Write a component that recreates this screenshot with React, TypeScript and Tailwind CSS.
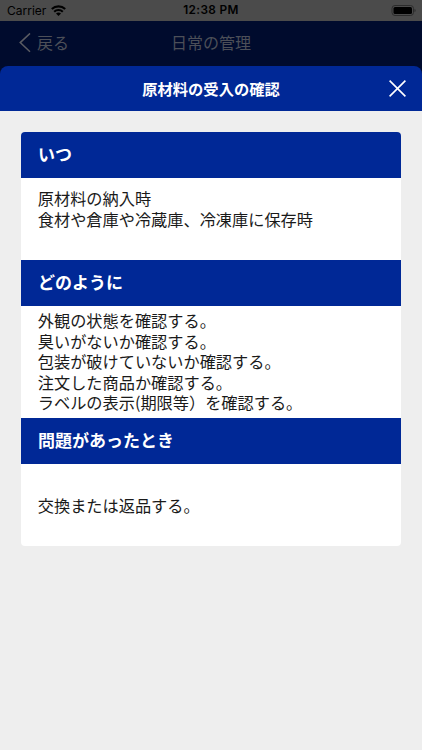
import { ReactNode } from "react";

interface Section {
  title: string;
  lines: string[];
  bodyClass: string;
}

const SECTIONS: Section[] = [
  {
    title: "いつ",
    lines: ["原材料の納入時", "食材や倉庫や冷蔵庫、冷凍庫に保存時"],
    bodyClass: "h-[82px] pt-[10px]",
  },
  {
    title: "どのように",
    lines: [
      "外観の状態を確認する。",
      "臭いがないか確認する。",
      "包装が破けていないか確認する。",
      "注文した商品か確認する。",
      "ラベルの表示(期限等）を確認する。",
    ],
    bodyClass: "h-[112px] pt-[4px]",
  },
  {
    title: "問題があったとき",
    lines: ["交換または返品する。"],
    bodyClass: "h-[81.5px] pt-[30.5px]",
  },
];

function StatusBar() {
  return (
    <div className="grid h-[21px] grid-cols-3 items-center bg-[#4b4b4b] font-['Inter','Liberation_Sans',sans-serif] leading-none text-black">
      <div className="flex items-center gap-[4.5px] pl-[7px]">
        <span className="pt-px text-[12px]">Carrier</span>
        <svg className="h-[11px] w-[15px]" viewBox="0 0 15 11" fill="none" stroke="black" strokeWidth="2.1">
          <path d="M0.8 4.1a9.6 9.6 0 0 1 13.4 0" />
          <path d="M3.2 6.7a6.1 6.1 0 0 1 8.6 0" />
          <path d="M7.5 11 5 8.6a3.6 3.6 0 0 1 5 0z" fill="black" stroke="none" />
        </svg>
      </div>
      <span className="whitespace-nowrap pt-px text-center text-[11.8px] font-semibold tracking-[0.35px]">12:38 PM</span>
      <div className="flex justify-end pr-[6px]">
        <svg className="h-[11px] w-[25px]" viewBox="0 0 25 11">
          <rect x="1" y="0.5" width="21.5" height="10" rx="3" fill="none" stroke="#2c2c2c" />
          <rect x="2.5" y="2" width="18.5" height="7" rx="1.5" fill="black" />
          <path d="M23.6 3.8v3.4c1.2-.6 1.2-2.8 0-3.4z" fill="#222" />
        </svg>
      </div>
    </div>
  );
}

function NavBar() {
  return (
    <div className="grid h-[44.5px] grid-cols-[1fr_auto_1fr] items-center bg-[#000b2d] text-[16px] leading-none text-[#4c4f58]">
      <div className="flex items-center gap-[6px] pl-[19px]">
        <svg className="h-5 w-3" viewBox="0 0 12 20" fill="none" stroke="#5a5c63" strokeWidth="1.5">
          <path d="M11 0.4 1.2 9.6 11 18.8" />
        </svg>
        <span className="pb-[3px]">戻る</span>
      </div>
      <span className="pb-[2px]">日常の管理</span>
    </div>
  );
}

function InfoSection({ title, bodyClass, children }: { title: string; bodyClass: string; children: ReactNode }) {
  return (
    <section>
      <h2 className="flex h-[46px] items-center bg-[#002896] pb-[3px] pl-[16.7px] text-[17px] font-bold leading-none text-white">
        {title}
      </h2>
      <div className={`pl-[16.5px] text-[16.2px] leading-[20.6px] text-[#1a1a1a] ${bodyClass}`}>{children}</div>
    </section>
  );
}

export default function App() {
  return (
    <div className="flex h-[750px] w-[422px] flex-col overflow-hidden bg-[#eeeeee] font-['Noto_Sans_CJK_JP',sans-serif]">
      <StatusBar />
      <NavBar />
      <div className="bg-[#000b2d]">
        <header className="grid h-[45.5px] grid-cols-[1fr_auto_1fr] items-center rounded-t-[8px] bg-[#002896] text-white">
          <span />
          <h1 className="text-[15.3px] font-bold leading-none">原材料の受入の確認</h1>
          <button className="justify-self-end pr-[16.5px]" aria-label="閉じる">
            <svg className="h-[17px] w-[17px]" viewBox="0 0 17 17" fill="none" stroke="white" strokeWidth="1.6">
              <path d="M0.6 0.6l15.8 15.8M16.4 0.6 0.6 16.4" />
            </svg>
          </button>
        </header>
      </div>
      <main className="ml-[21.3px] mt-[21px] w-[379.3px] overflow-hidden rounded-[4px] bg-white">
        {SECTIONS.map((s) => (
          <InfoSection key={s.title} title={s.title} bodyClass={s.bodyClass}>
            <p className="whitespace-pre">{s.lines.join("\n")}</p>
          </InfoSection>
        ))}
      </main>
    </div>
  );
}
